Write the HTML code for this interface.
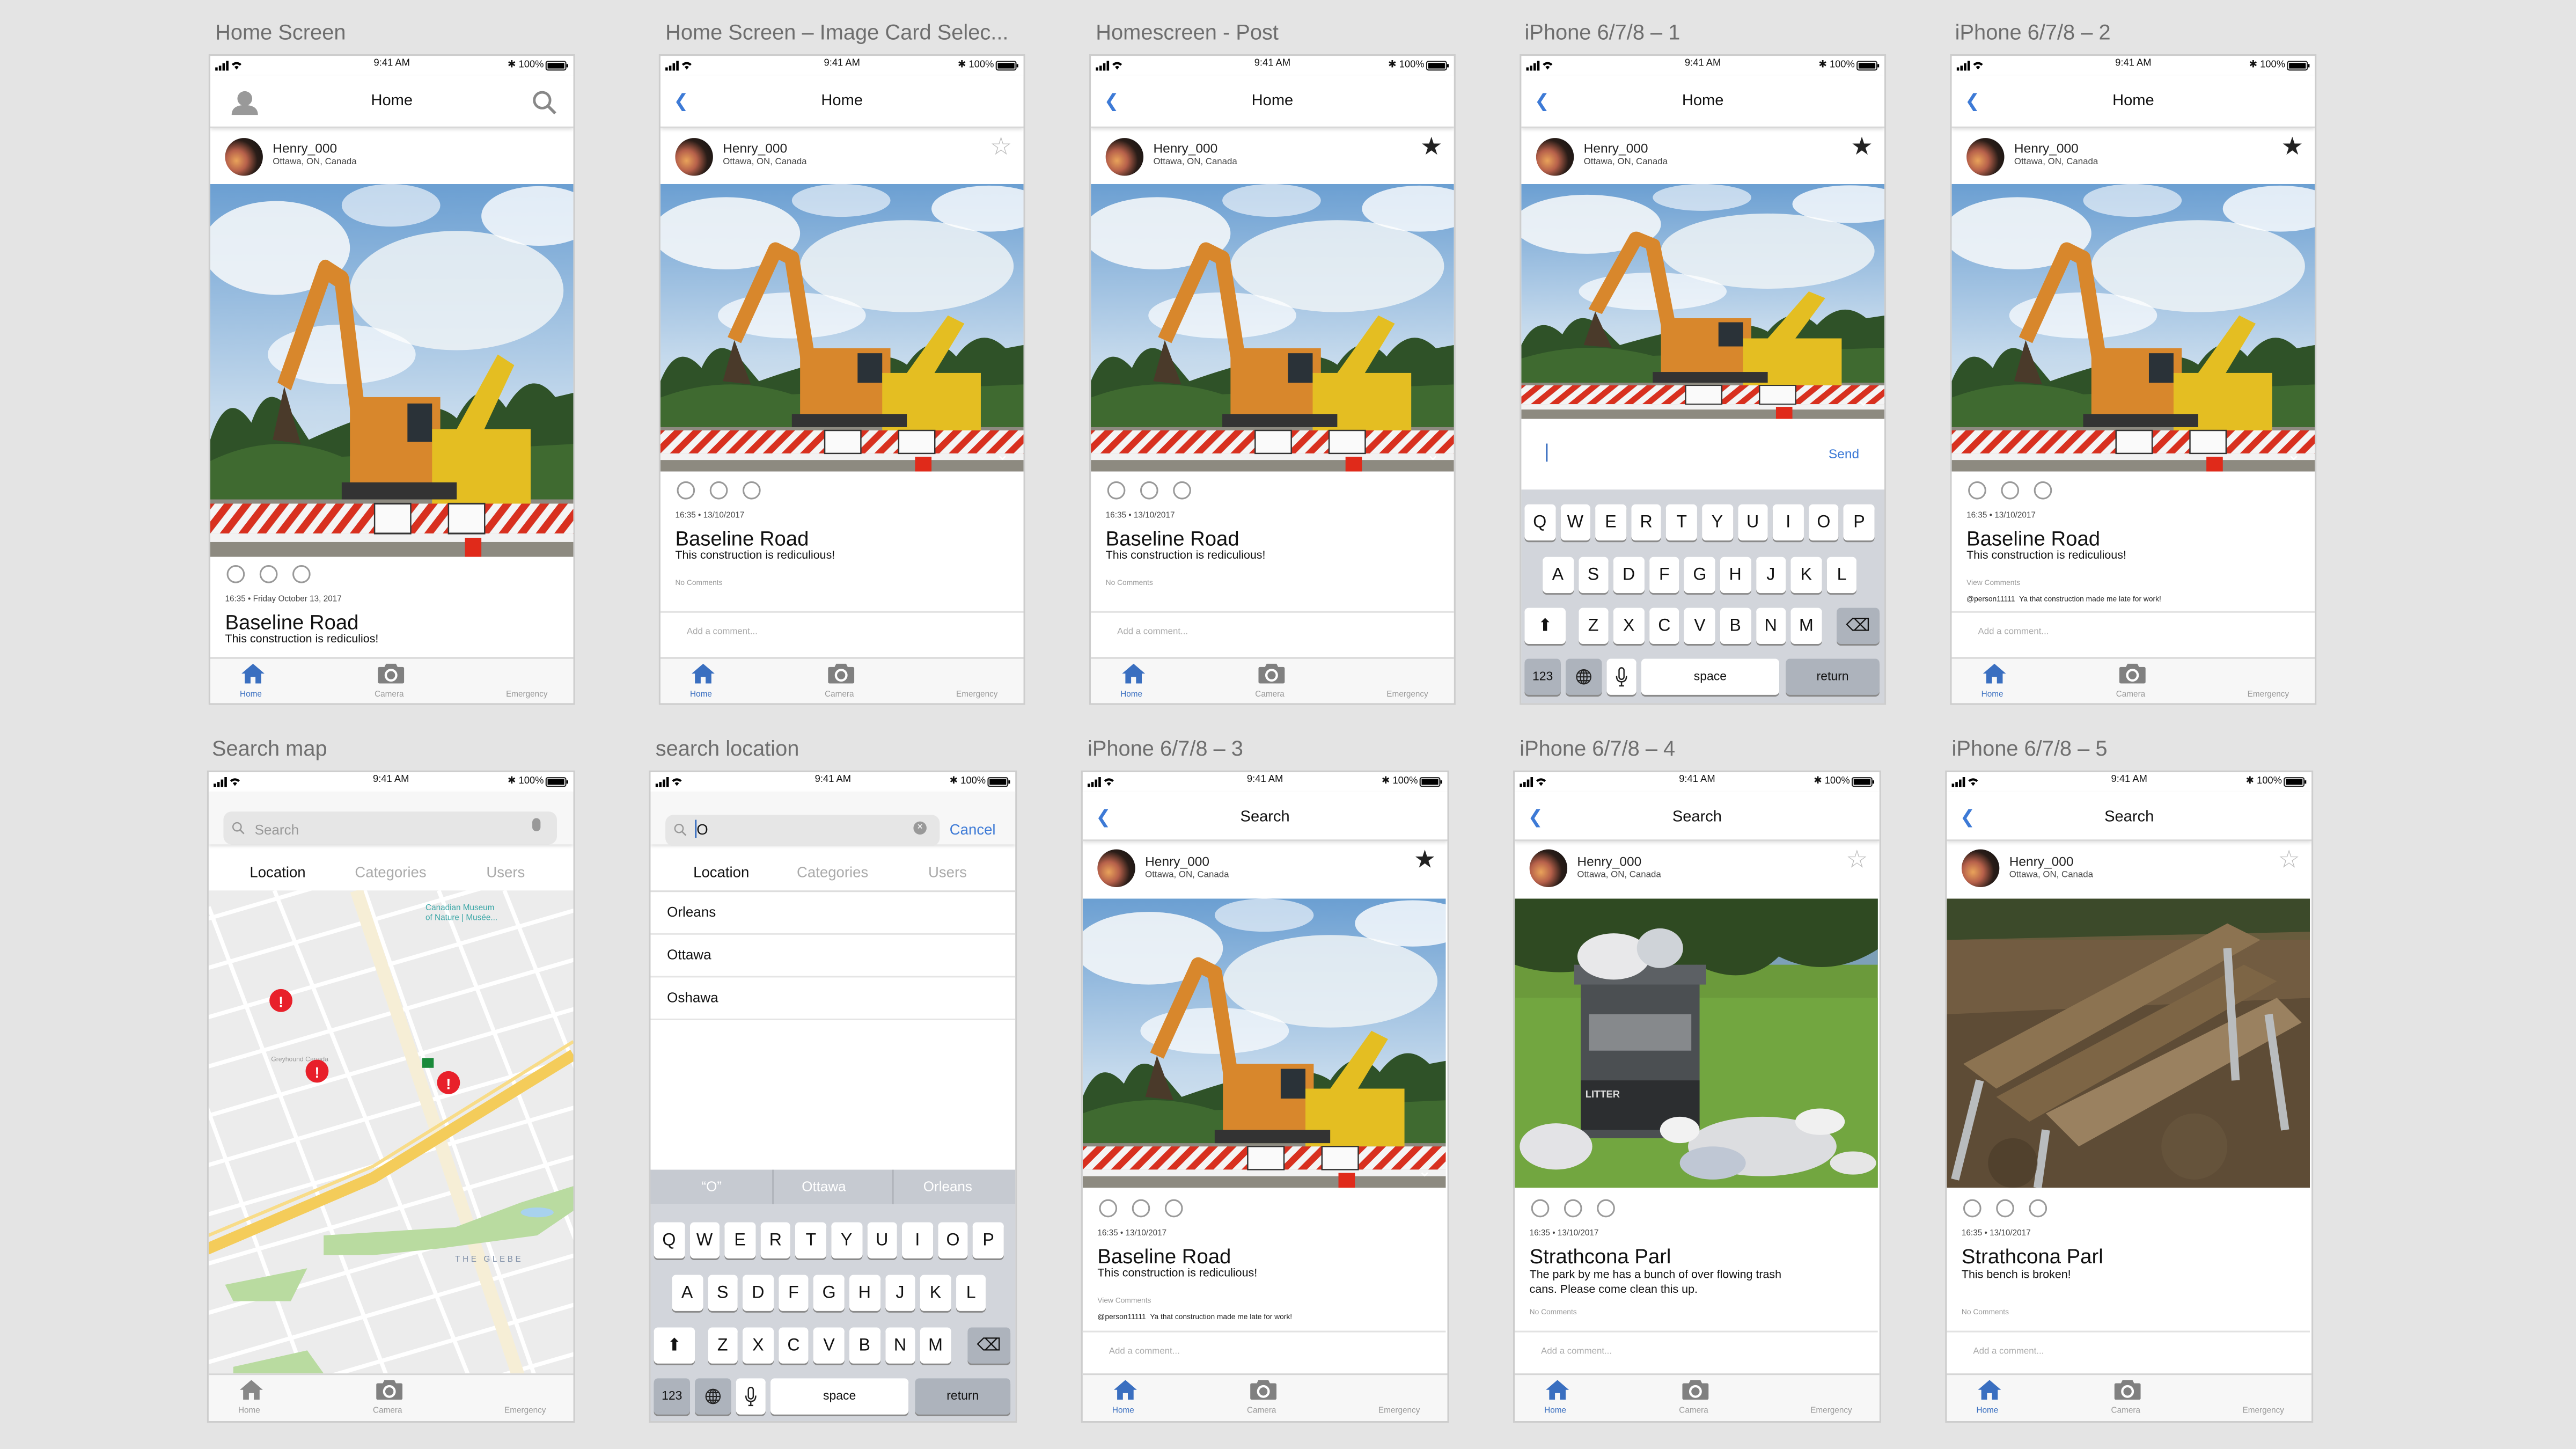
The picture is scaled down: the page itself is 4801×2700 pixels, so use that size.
<!DOCTYPE html>
<html><head><meta charset="utf-8">
<style>
html,body{margin:0;padding:0;background:#e4e4e4;overflow:hidden}
#w{position:absolute;left:0;top:0;width:1568px;height:882px;transform:scale(3.0619,3.0612);transform-origin:0 0;font-family:"Liberation Sans",sans-serif;background:#e4e4e4}
.ttl{position:absolute;font-size:13px;color:#6e6e6e;white-space:nowrap}
.ph{position:absolute;width:221px;height:394px;background:#fff;outline:1px solid #cdcdcd;overflow:hidden}
.ph *{position:absolute;margin:0;white-space:nowrap}
.sbt{top:2px;left:0;width:100%;text-align:center;font-size:6px;color:#111}
.sbr{top:2px;right:18px;font-size:6px;color:#111}
.nav{top:12px;left:0;width:100%;height:31px;border-bottom:1px solid #d8d8d8;box-shadow:0 1px 2px rgba(0,0,0,.12);background:#fff}
.nt{top:10px;left:0;width:100%;text-align:center;font-size:9.5px;color:#111}
.back{top:9px;left:8px;font-size:11px;color:#3d7ad6}
.av{left:9px;top:50px;width:23px;height:23px;border-radius:50%;background:radial-gradient(circle at 30% 60%,#e9a35a 0,#b6604a 30%,#2a1d18 60%,#111 100%)}
.nm{left:38px;top:52px;font-size:8px;color:#222}
.loc{left:38px;top:62px;font-size:5.5px;color:#444}
.star{right:7px;top:46px;font-size:15px;color:#222}
.star.o{color:#bbb}
.img{left:0;top:78px;width:221px}
.cir{width:9px;height:9px;border:1px solid #999;border-radius:50%}
.tm{left:9px;font-size:5px;color:#444}
.h{left:9px;font-size:12.5px;color:#111}
.d{left:9px;font-size:7px;color:#111}
.s{left:9px;font-size:4.5px;color:#999}
.ac{left:0;width:221px;height:26px;border-top:1px solid #e2e2e2;background:#fff}
.ac span{left:16px;top:9px;font-size:5.5px;color:#aaa}
.tb{left:0;top:366px;width:100%;height:28px;border-top:1px solid #d6d6d6;background:#f7f7f7}
.tb .l{top:19px;font-size:5px;color:#999}
.chev{font-size:10px;color:#fff;left:204px}
.kb{left:0;width:100%;background:#d2d5db}
.k{width:18.5px;height:22px;background:#fff;border-radius:2.5px;box-shadow:0 1px 0 #8a8a8a;font-size:10.5px;line-height:22px;text-align:center;color:#111}
.k.g{background:#adb3bc}
.k.f{font-size:7.5px}
.k svg{left:50%;top:50%;transform:translate(-50%,-50%)}
</style></head><body>
<svg width="0" height="0" style="position:absolute">
<defs>
<linearGradient id="sky" x1="0" y1="0" x2="0" y2="1"><stop offset="0" stop-color="#6b9fd2"/><stop offset=".6" stop-color="#c4d9ec"/><stop offset="1" stop-color="#e3ebf1"/></linearGradient>
<pattern id="str" width="8" height="8" patternUnits="userSpaceOnUse" patternTransform="rotate(45)"><rect width="4" height="8" fill="#d8301f"/><rect x="4" width="4" height="8" fill="#f4f4f4"/></pattern>
<symbol id="cons" viewBox="0 0 221 175" preserveAspectRatio="none">
<rect width="221" height="175" fill="url(#sky)"/>
<ellipse cx="40" cy="30" rx="45" ry="22" fill="#f3f6f8" opacity=".9"/>
<ellipse cx="150" cy="50" rx="65" ry="28" fill="#eef3f6" opacity=".85"/>
<ellipse cx="200" cy="15" rx="35" ry="14" fill="#fff" opacity=".8"/>
<ellipse cx="80" cy="80" rx="45" ry="14" fill="#fff" opacity=".7"/>
<ellipse cx="110" cy="10" rx="30" ry="10" fill="#fff" opacity=".6"/>
<path d="M0 120 Q10 95 25 112 Q35 90 50 108 L60 120 Q130 95 150 110 Q165 88 180 105 Q195 85 210 100 L221 98 L221 150 L0 150Z" fill="#2f5228"/>
<path d="M0 130 Q40 115 80 128 L221 122 L221 150 L0 150Z" fill="#3f6a30"/>
<rect y="148" width="221" height="27" fill="#8d8a80"/>
<path d="M95 140 L80 45 L70 40 L45 95" fill="none" stroke="#d8872c" stroke-width="9" stroke-linejoin="round"/>
<path d="M45 95 L38 120 L55 122Z" fill="#4a3a2a"/>
<rect x="85" y="100" width="55" height="42" fill="#d8872c"/>
<rect x="120" y="103" width="15" height="18" fill="#2a3238"/>
<rect x="135" y="115" width="60" height="35" fill="#e4be22"/>
<path d="M150 115 L175 80 L185 85 L165 118Z" fill="#e4be22"/>
<rect x="80" y="140" width="70" height="8" fill="#333"/>
<rect x="0" y="150" width="221" height="14" fill="url(#str)"/>
<rect x="0" y="164" width="221" height="4" fill="#f2f2f2"/>
<rect x="100" y="150" width="22" height="14" fill="#fafafa" stroke="#333" stroke-width=".8"/>
<rect x="145" y="150" width="22" height="14" fill="#fafafa" stroke="#333" stroke-width=".8"/>
<rect x="155" y="166" width="10" height="9" fill="#e02a1a"/>
</symbol>
<symbol id="trash" viewBox="0 0 221 175" preserveAspectRatio="none">
<rect width="221" height="175" fill="#6b9a3b"/>
<rect width="221" height="40" fill="#7da0b8"/>
<path d="M0 0 L221 0 L221 30 Q190 50 160 35 Q140 55 110 40 Q80 55 60 38 Q30 50 0 40Z" fill="#2f4a22"/>
<rect y="60" width="221" height="115" fill="#72a640"/>
<rect x="40" y="45" width="72" height="100" fill="#4b4f52"/>
<rect x="36" y="40" width="80" height="12" fill="#5c6064"/>
<rect x="45" y="70" width="62" height="22" fill="#86898c"/>
<rect x="40" y="110" width="72" height="30" fill="#2c2e30"/>
<ellipse cx="60" cy="35" rx="22" ry="14" fill="#e8e8ea"/>
<ellipse cx="88" cy="30" rx="14" ry="12" fill="#cfd3d8"/>
<ellipse cx="150" cy="150" rx="45" ry="18" fill="#dcdde0"/>
<ellipse cx="25" cy="150" rx="22" ry="14" fill="#e3e3e6"/>
<ellipse cx="120" cy="160" rx="20" ry="10" fill="#bfc7d4"/>
<ellipse cx="185" cy="135" rx="15" ry="8" fill="#f0f0f0"/>
<ellipse cx="100" cy="140" rx="12" ry="8" fill="#f2f2f2"/>
<ellipse cx="205" cy="160" rx="14" ry="7" fill="#e6e6e6"/>
</symbol>
<symbol id="bench" viewBox="0 0 221 175" preserveAspectRatio="none">
<rect width="221" height="175" fill="#5e4c36"/>
<rect width="221" height="25" fill="#3c4a2a"/>
<path d="M0 25 L221 20 L221 60 L0 70Z" fill="#7a6446" opacity=".7"/>
<path d="M10 100 L170 15 L190 25 L30 115Z" fill="#8c7351"/>
<path d="M30 120 L180 40 L200 50 L50 135Z" fill="#7d6545"/>
<path d="M60 130 L200 60 L215 75 L80 150Z" fill="#9a8160"/>
<path d="M20 110 L5 170 M60 140 L55 175 M170 30 L175 110 M195 70 L205 140" stroke="#b9bcbe" stroke-width="5" fill="none"/>
<circle cx="40" cy="160" r="15" fill="#4a3a28" opacity=".6"/>
<circle cx="150" cy="150" r="20" fill="#6b5840" opacity=".6"/>
</symbol>
<symbol id="home" viewBox="0 0 14 12"><path d="M7 0 L14 6 L12 6 L12 12 L8.5 12 L8.5 8 L5.5 8 L5.5 12 L2 12 L2 6 L0 6Z"/></symbol>
<symbol id="cam" viewBox="0 0 16 12"><path d="M0 3 Q0 2 1 2 L4 2 L5 0 L11 0 L12 2 L15 2 Q16 2 16 3 L16 11 Q16 12 15 12 L1 12 Q0 12 0 11Z" fill="#808080"/><circle cx="8" cy="7" r="3.2" fill="none" stroke="#fff" stroke-width="1.4"/></symbol>
<symbol id="sig" viewBox="0 0 20 6"><rect x="0" y="4" width="1.5" height="2"/><rect x="2.2" y="3" width="1.5" height="3"/><rect x="4.4" y="1.5" width="1.5" height="4.5"/><rect x="6.6" y="0" width="1.5" height="6"/><path d="M10 2 Q13 -0.5 16 2 L15 3 Q13 1.3 11 3Z M11.7 3.7 Q13 2.6 14.3 3.7 L13 5.4Z"/></symbol>
<symbol id="bat" viewBox="0 0 14 6"><rect x=".4" y=".4" width="12" height="5.2" rx="1" fill="none" stroke="#222" stroke-width=".7"/><rect x="1.3" y="1.3" width="10.2" height="3.4"/><rect x="12.8" y="2" width="1" height="2"/></symbol>
<symbol id="globe" viewBox="0 0 10 10"><g fill="none" stroke="#222" stroke-width=".7"><circle cx="5" cy="5" r="4.3"/><ellipse cx="5" cy="5" rx="2" ry="4.3"/><path d="M.7 5H9.3M1.5 2.7H8.5M1.5 7.3H8.5M5 .7V9.3"/></g></symbol>
<symbol id="mic" viewBox="0 0 8 12"><g fill="none" stroke="#222" stroke-width=".8"><rect x="2.5" y=".5" width="3" height="7" rx="1.5"/><path d="M1 5.5 Q1 9 4 9 Q7 9 7 5.5M4 9V11.5M2.5 11.5H5.5"/></g></symbol>
</defs></svg>

<div id="w">
<div class="ttl" style="left:131px;top:12px">Home Screen</div>
<div class="ttl" style="left:405px;top:12px">Home Screen – Image Card Selec...</div>
<div class="ttl" style="left:667px;top:12px">Homescreen - Post</div>
<div class="ttl" style="left:928px;top:12px">iPhone 6/7/8 – 1</div>
<div class="ttl" style="left:1190px;top:12px">iPhone 6/7/8 – 2</div>
<div class="ttl" style="left:129px;top:448px">Search map</div>
<div class="ttl" style="left:399px;top:448px">search location</div>
<div class="ttl" style="left:662px;top:448px">iPhone 6/7/8 – 3</div>
<div class="ttl" style="left:925px;top:448px">iPhone 6/7/8 – 4</div>
<div class="ttl" style="left:1188px;top:448px">iPhone 6/7/8 – 5</div>

<!-- R1 P1 -->
<div class="ph" style="left:128px;top:34px">
<svg style="left:3px;top:3px" width="20" height="6"><use href="#sig"/></svg><div class="sbt">9:41 AM</div><div class="sbr">✱ 100%</div><svg style="right:3px;top:3px" width="14" height="6"><use href="#bat"/></svg>
<div class="nav"><svg style="left:12px;top:9px" width="18" height="15" viewBox="0 0 18 15"><circle cx="9" cy="5" r="4.5" fill="#999"/><path d="M1 15 Q1 9 9 9 Q17 9 17 15Z" fill="#999"/></svg><div class="nt">Home</div><svg style="right:10px;top:9px" width="15" height="15" viewBox="0 0 15 15"><circle cx="6" cy="6" r="4.8" fill="none" stroke="#888" stroke-width="1.6"/><path d="M9.5 9.5 L14 14" stroke="#888" stroke-width="1.8"/></svg></div>
<div class="av"></div><div class="nm">Henry_000</div><div class="loc">Ottawa, ON, Canada</div>
<svg class="img" height="227"><use href="#cons" width="221" height="227"/></svg>
<div class="cir" style="left:10px;top:310px"></div><div class="cir" style="left:30px;top:310px"></div><div class="cir" style="left:50px;top:310px"></div>
<div class="tm" style="top:328px">16:35 • Friday October 13, 2017</div>
<div class="h" style="top:338px">Baseline Road</div>
<div class="d" style="top:352px">This construction is rediculios!</div>
<div class="tb"><svg style="left:19px;top:3px" width="14" height="12" fill="#3a6fc0"><use href="#home"/></svg><div class="l" style="left:18px;color:#3a6fc0">Home</div><svg style="left:102px;top:3px" width="16" height="12"><use href="#cam"/></svg><div class="l" style="left:100px">Camera</div><div class="l" style="left:180px">Emergency</div></div>
</div>

<!-- R1 P2..P5 -->
<div class="ph" style="left:402px;top:34px">
<svg style="left:3px;top:3px" width="20" height="6"><use href="#sig"/></svg><div class="sbt">9:41 AM</div><div class="sbr">✱ 100%</div><svg style="right:3px;top:3px" width="14" height="6"><use href="#bat"/></svg>
<div class="nav"><div class="back">❮</div><div class="nt">Home</div></div>
<div class="av"></div><div class="nm">Henry_000</div><div class="loc">Ottawa, ON, Canada</div><div class="star o">☆</div>
<svg class="img" height="175"><use href="#cons" width="221" height="175"/></svg><div class="chev" style="top:238px">⌄</div>
<div class="cir" style="left:10px;top:259px"></div><div class="cir" style="left:30px;top:259px"></div><div class="cir" style="left:50px;top:259px"></div>
<div class="tm" style="top:277px">16:35 • 13/10/2017</div>
<div class="h" style="top:287px">Baseline Road</div>
<div class="d" style="top:301px">This construction is rediculious!</div>
<div class="s" style="top:318px">No Comments</div>
<div class="ac" style="top:338px"><span>Add a comment...</span></div>
<div class="tb"><svg style="left:19px;top:3px" width="14" height="12" fill="#3a6fc0"><use href="#home"/></svg><div class="l" style="left:18px;color:#3a6fc0">Home</div><svg style="left:102px;top:3px" width="16" height="12"><use href="#cam"/></svg><div class="l" style="left:100px">Camera</div><div class="l" style="left:180px">Emergency</div></div>
</div>

<div class="ph" style="left:664px;top:34px">
<svg style="left:3px;top:3px" width="20" height="6"><use href="#sig"/></svg><div class="sbt">9:41 AM</div><div class="sbr">✱ 100%</div><svg style="right:3px;top:3px" width="14" height="6"><use href="#bat"/></svg>
<div class="nav"><div class="back">❮</div><div class="nt">Home</div></div>
<div class="av"></div><div class="nm">Henry_000</div><div class="loc">Ottawa, ON, Canada</div><div class="star">★</div>
<svg class="img" height="175"><use href="#cons" width="221" height="175"/></svg><div class="chev" style="top:238px">⌄</div>
<div class="cir" style="left:10px;top:259px"></div><div class="cir" style="left:30px;top:259px"></div><div class="cir" style="left:50px;top:259px"></div>
<div class="tm" style="top:277px">16:35 • 13/10/2017</div>
<div class="h" style="top:287px">Baseline Road</div>
<div class="d" style="top:301px">This construction is rediculious!</div>
<div class="s" style="top:318px">No Comments</div>
<div class="ac" style="top:338px"><span>Add a comment...</span></div>
<div class="tb"><svg style="left:19px;top:3px" width="14" height="12" fill="#3a6fc0"><use href="#home"/></svg><div class="l" style="left:18px;color:#3a6fc0">Home</div><svg style="left:102px;top:3px" width="16" height="12"><use href="#cam"/></svg><div class="l" style="left:100px">Camera</div><div class="l" style="left:180px">Emergency</div></div>
</div>

<div class="ph" style="left:926px;top:34px">
<svg style="left:3px;top:3px" width="20" height="6"><use href="#sig"/></svg><div class="sbt">9:41 AM</div><div class="sbr">✱ 100%</div><svg style="right:3px;top:3px" width="14" height="6"><use href="#bat"/></svg>
<div class="nav"><div class="back">❮</div><div class="nt">Home</div></div>
<div class="av"></div><div class="nm">Henry_000</div><div class="loc">Ottawa, ON, Canada</div><div class="star">★</div>
<svg class="img" height="143"><use href="#cons" width="221" height="143"/></svg><div class="chev" style="top:205px">⌄</div>
<div style="left:15px;top:236px;width:1px;height:11px;background:#3a6fc0"></div>
<div style="left:187px;top:238px;font-size:8px;color:#3d7ad6">Send</div>
<div class="kb" style="top:264px;height:130px">
<div class="k" style="left:2px;top:9px">Q</div><div class="k" style="left:23.6px;top:9px">W</div><div class="k" style="left:45.2px;top:9px">E</div><div class="k" style="left:66.8px;top:9px">R</div><div class="k" style="left:88.4px;top:9px">T</div><div class="k" style="left:110px;top:9px">Y</div><div class="k" style="left:131.6px;top:9px">U</div><div class="k" style="left:153.2px;top:9px">I</div><div class="k" style="left:174.8px;top:9px">O</div><div class="k" style="left:196.4px;top:9px">P</div>
<div class="k" style="left:13px;top:41px">A</div><div class="k" style="left:34.6px;top:41px">S</div><div class="k" style="left:56.2px;top:41px">D</div><div class="k" style="left:77.8px;top:41px">F</div><div class="k" style="left:99.4px;top:41px">G</div><div class="k" style="left:121px;top:41px">H</div><div class="k" style="left:142.6px;top:41px">J</div><div class="k" style="left:164.2px;top:41px">K</div><div class="k" style="left:185.8px;top:41px">L</div>
<div class="k" style="left:2px;top:72px;width:25px">⬆</div><div class="k" style="left:34.6px;top:72px">Z</div><div class="k" style="left:56.2px;top:72px">X</div><div class="k" style="left:77.8px;top:72px">C</div><div class="k" style="left:99.4px;top:72px">V</div><div class="k" style="left:121px;top:72px">B</div><div class="k" style="left:142.6px;top:72px">N</div><div class="k" style="left:164.2px;top:72px">M</div><div class="k g" style="left:192px;top:72px;width:26px">⌫</div>
<div class="k g f" style="left:2px;top:103px;width:22px">123</div><div class="k g" style="left:27px;top:103px;width:22px"><svg width="10" height="10"><use href="#globe"/></svg></div><div class="k" style="left:52px;top:103px;width:18px"><svg width="8" height="12"><use href="#mic"/></svg></div><div class="k f" style="left:73px;top:103px;width:84px">space</div><div class="k g f" style="left:161px;top:103px;width:57px">return</div>
</div>
</div>

<div class="ph" style="left:1188px;top:34px">
<svg style="left:3px;top:3px" width="20" height="6"><use href="#sig"/></svg><div class="sbt">9:41 AM</div><div class="sbr">✱ 100%</div><svg style="right:3px;top:3px" width="14" height="6"><use href="#bat"/></svg>
<div class="nav"><div class="back">❮</div><div class="nt">Home</div></div>
<div class="av"></div><div class="nm">Henry_000</div><div class="loc">Ottawa, ON, Canada</div><div class="star">★</div>
<svg class="img" height="175"><use href="#cons" width="221" height="175"/></svg><div class="chev" style="top:238px">⌄</div>
<div class="cir" style="left:10px;top:259px"></div><div class="cir" style="left:30px;top:259px"></div><div class="cir" style="left:50px;top:259px"></div>
<div class="tm" style="top:277px">16:35 • 13/10/2017</div>
<div class="h" style="top:287px">Baseline Road</div>
<div class="d" style="top:301px">This construction is rediculious!</div>
<div class="s" style="top:318px">View Comments</div>
<div class="s" style="top:328px;color:#222">@person11111 &nbsp;Ya that construction made me late for work!</div>
<div class="ac" style="top:338px"><span>Add a comment...</span></div>
<div class="tb"><svg style="left:19px;top:3px" width="14" height="12" fill="#3a6fc0"><use href="#home"/></svg><div class="l" style="left:18px;color:#3a6fc0">Home</div><svg style="left:102px;top:3px" width="16" height="12"><use href="#cam"/></svg><div class="l" style="left:100px">Camera</div><div class="l" style="left:180px">Emergency</div></div>
</div>

<!-- R2 P1 map -->
<div class="ph" style="left:127px;top:470px;width:222px;height:395px">
<svg style="left:3px;top:3px" width="20" height="6"><use href="#sig"/></svg><div class="sbt">9:41 AM</div><div class="sbr">✱ 100%</div><svg style="right:3px;top:3px" width="14" height="6"><use href="#bat"/></svg>
<div style="left:0;top:12px;width:222px;height:32px;background:#f7f7f7;box-shadow:0 1px 2px rgba(0,0,0,.15)"></div>
<div style="left:9px;top:24px;width:203px;height:20px;border-radius:5px;background:#e6e6e6"></div>
<svg style="left:14px;top:30px" width="8" height="8" viewBox="0 0 8 8"><circle cx="3.3" cy="3.3" r="2.5" fill="none" stroke="#999" stroke-width=".8"/><path d="M5 5L7.5 7.5" stroke="#999" stroke-width=".9"/></svg>
<div style="left:28px;top:30px;font-size:8.5px;color:#999">Search</div>
<div style="left:197px;top:28px;width:5px;height:8px;border-radius:3px;background:#999"></div>
<div style="left:25px;top:56px;font-size:9px;color:#111">Location</div>
<div style="left:89px;top:56px;font-size:9px;color:#aaa">Categories</div>
<div style="left:169px;top:56px;font-size:9px;color:#aaa">Users</div>
<svg style="left:0;top:72px" width="222" height="294" viewBox="0 0 222 294">
<rect width="222" height="294" fill="#ececec"/>
<g stroke="#fff" stroke-width="2.5" fill="none">
<path d="M-10 20 L230 -50 M-10 50 L230 -20 M-10 80 L230 10 M-10 110 L230 40 M-10 140 L230 70 M-10 170 L230 100 M-10 200 L230 130 M-10 230 L230 160 M-10 260 L230 190 M-10 290 L230 220 M-10 320 L230 250 M-10 350 L230 280 M-10 380 L230 310"/>
<path d="M0 10 L110 300 M40 0 L160 300 M95 0 L200 300 M140 0 L230 230 M180 0 L240 150 M-20 80 L60 300"/>
</g>
<path d="M90 0 L190 300" stroke="#f6eed6" stroke-width="8"/>
<path d="M-5 220 L100 175 L222 100" stroke="#f4cc5a" stroke-width="7" fill="none"/>
<path d="M-5 212 L100 168 L222 92" stroke="#f8dc88" stroke-width="2" fill="none"/>
<path d="M70 210 L150 205 L190 190 L222 180 L222 195 L200 210 L140 218 L100 222 L70 222Z" fill="#b9dba0"/>
<path d="M10 240 L60 230 L50 250 L15 250Z" fill="#b9dba0"/>
<path d="M15 290 L60 280 L70 294 L15 294Z" fill="#b9dba0"/>
<ellipse cx="200" cy="196" rx="10" ry="3" fill="#a8d2ee"/>
<text x="132" y="12" font-size="5" fill="#3aa6a6" font-family="Liberation Sans">Canadian Museum</text>
<text x="132" y="18" font-size="5" fill="#3aa6a6" font-family="Liberation Sans">of Nature | Musée...</text>
<text x="38" y="104" font-size="4" fill="#999" font-family="Liberation Sans">Greyhound Canada</text>
<text x="150" y="226" font-size="5" fill="#8090a8" letter-spacing="1.5" font-family="Liberation Sans">THE GLEBE</text>
<rect x="130" y="102" width="7" height="6" fill="#1a8a3a"/>
<g fill="#e8202a"><circle cx="44" cy="67" r="7"/><circle cx="66" cy="110" r="7"/><circle cx="146" cy="117" r="7"/></g>
<g fill="#fff" font-size="9" font-weight="bold" font-family="Liberation Sans" text-anchor="middle"><text x="44" y="71">!</text><text x="66" y="114">!</text><text x="146" y="121">!</text></g>
</svg>
<div class="tb"><svg style="left:19px;top:3px" width="14" height="12" fill="#888"><use href="#home"/></svg><div class="l" style="left:18px">Home</div><svg style="left:102px;top:3px" width="16" height="12"><use href="#cam"/></svg><div class="l" style="left:100px">Camera</div><div class="l" style="left:180px">Emergency</div></div>
</div>

<!-- R2 P2 search location -->
<div class="ph" style="left:396px;top:470px;width:222px;height:395px">
<svg style="left:3px;top:3px" width="20" height="6"><use href="#sig"/></svg><div class="sbt">9:41 AM</div><div class="sbr">✱ 100%</div><svg style="right:3px;top:3px" width="14" height="6"><use href="#bat"/></svg>
<div style="left:0;top:12px;width:222px;height:32px;background:#f7f7f7;box-shadow:0 1px 2px rgba(0,0,0,.15)"></div>
<div style="left:9px;top:26px;width:167px;height:19px;border-radius:5px;background:#e6e6e6"></div>
<svg style="left:14px;top:31px" width="8" height="8" viewBox="0 0 8 8"><circle cx="3.3" cy="3.3" r="2.5" fill="none" stroke="#999" stroke-width=".8"/><path d="M5 5L7.5 7.5" stroke="#999" stroke-width=".9"/></svg>
<div style="left:28px;top:30px;font-size:9px;color:#111">O</div>
<div style="left:27px;top:29px;width:1px;height:11px;background:#3a6fc0"></div>
<div style="left:160px;top:30px;width:8px;height:8px;border-radius:50%;background:#999;color:#fff;font-size:6px;line-height:8px;text-align:center">×</div>
<div style="left:182px;top:30px;font-size:9px;color:#3d7ad6">Cancel</div>
<div style="left:26px;top:56px;font-size:9px;color:#111">Location</div>
<div style="left:89px;top:56px;font-size:9px;color:#aaa">Categories</div>
<div style="left:169px;top:56px;font-size:9px;color:#aaa">Users</div>
<div style="left:0;top:72px;width:222px;height:1px;background:#ddd"></div>
<div style="left:10px;top:80px;font-size:8.5px;color:#111">Orleans</div>
<div style="left:0;top:98px;width:222px;height:1px;background:#e5e5e5"></div>
<div style="left:10px;top:106px;font-size:8.5px;color:#111">Ottawa</div>
<div style="left:0;top:124px;width:222px;height:1px;background:#e5e5e5"></div>
<div style="left:10px;top:132px;font-size:8.5px;color:#111">Oshawa</div>
<div style="left:0;top:150px;width:222px;height:1px;background:#e5e5e5"></div>
<div style="left:0;top:242px;width:222px;height:21px;background:#c6cad1"></div>
<div style="left:31px;top:247px;font-size:8.5px;color:#fff">“O”</div>
<div style="left:74px;top:242px;width:1px;height:21px;background:#b0b4bb"></div>
<div style="left:92px;top:247px;font-size:8.5px;color:#fff">Ottawa</div>
<div style="left:147px;top:242px;width:1px;height:21px;background:#b0b4bb"></div>
<div style="left:166px;top:247px;font-size:8.5px;color:#fff">Orleans</div>
<div class="kb" style="top:263px;height:132px">
<div class="k" style="left:2px;top:11px">Q</div><div class="k" style="left:23.6px;top:11px">W</div><div class="k" style="left:45.2px;top:11px">E</div><div class="k" style="left:66.8px;top:11px">R</div><div class="k" style="left:88.4px;top:11px">T</div><div class="k" style="left:110px;top:11px">Y</div><div class="k" style="left:131.6px;top:11px">U</div><div class="k" style="left:153.2px;top:11px">I</div><div class="k" style="left:174.8px;top:11px">O</div><div class="k" style="left:196.4px;top:11px">P</div>
<div class="k" style="left:13px;top:43px">A</div><div class="k" style="left:34.6px;top:43px">S</div><div class="k" style="left:56.2px;top:43px">D</div><div class="k" style="left:77.8px;top:43px">F</div><div class="k" style="left:99.4px;top:43px">G</div><div class="k" style="left:121px;top:43px">H</div><div class="k" style="left:142.6px;top:43px">J</div><div class="k" style="left:164.2px;top:43px">K</div><div class="k" style="left:185.8px;top:43px">L</div>
<div class="k" style="left:2px;top:75px;width:25px">⬆</div><div class="k" style="left:34.6px;top:75px">Z</div><div class="k" style="left:56.2px;top:75px">X</div><div class="k" style="left:77.8px;top:75px">C</div><div class="k" style="left:99.4px;top:75px">V</div><div class="k" style="left:121px;top:75px">B</div><div class="k" style="left:142.6px;top:75px">N</div><div class="k" style="left:164.2px;top:75px">M</div><div class="k g" style="left:193px;top:75px;width:26px">⌫</div>
<div class="k g f" style="left:2px;top:106px;width:22px">123</div><div class="k g" style="left:27px;top:106px;width:22px"><svg width="10" height="10"><use href="#globe"/></svg></div><div class="k" style="left:52px;top:106px;width:18px"><svg width="8" height="12"><use href="#mic"/></svg></div><div class="k f" style="left:73px;top:106px;width:84px">space</div><div class="k g f" style="left:161px;top:106px;width:58px">return</div>
</div>
</div>

<!-- R2 P3 -->
<div class="ph" style="left:659px;top:470px;width:222px;height:395px">
<svg style="left:3px;top:3px" width="20" height="6"><use href="#sig"/></svg><div class="sbt">9:41 AM</div><div class="sbr">✱ 100%</div><svg style="right:3px;top:3px" width="14" height="6"><use href="#bat"/></svg>
<div class="nav" style="height:29px"><div class="back">❮</div><div class="nt">Search</div></div>
<div class="av" style="top:47px"></div><div class="nm" style="top:50px">Henry_000</div><div class="loc" style="top:60px">Ottawa, ON, Canada</div><div class="star" style="top:44px">★</div>
<svg class="img" style="top:77px" height="176"><use href="#cons" width="222" height="176"/></svg><div class="chev" style="top:238px">⌄</div>
<div class="cir" style="left:10px;top:260px"></div><div class="cir" style="left:30px;top:260px"></div><div class="cir" style="left:50px;top:260px"></div>
<div class="tm" style="top:278px">16:35 • 13/10/2017</div>
<div class="h" style="top:288px">Baseline Road</div>
<div class="d" style="top:302px">This construction is rediculious!</div>
<div class="s" style="top:319px">View Comments</div>
<div class="s" style="top:329px;color:#222">@person11111 &nbsp;Ya that construction made me late for work!</div>
<div class="ac" style="top:340px"><span>Add a comment...</span></div>
<div class="tb"><svg style="left:19px;top:3px" width="14" height="12" fill="#3a6fc0"><use href="#home"/></svg><div class="l" style="left:18px;color:#3a6fc0">Home</div><svg style="left:102px;top:3px" width="16" height="12"><use href="#cam"/></svg><div class="l" style="left:100px">Camera</div><div class="l" style="left:180px">Emergency</div></div>
</div>

<!-- R2 P4 -->
<div class="ph" style="left:922px;top:470px;width:222px;height:395px">
<svg style="left:3px;top:3px" width="20" height="6"><use href="#sig"/></svg><div class="sbt">9:41 AM</div><div class="sbr">✱ 100%</div><svg style="right:3px;top:3px" width="14" height="6"><use href="#bat"/></svg>
<div class="nav" style="height:29px"><div class="back">❮</div><div class="nt">Search</div></div>
<div class="av" style="top:47px"></div><div class="nm" style="top:50px">Henry_000</div><div class="loc" style="top:60px">Ottawa, ON, Canada</div><div class="star o" style="top:44px">☆</div>
<svg class="img" style="top:77px" height="176"><use href="#trash" width="222" height="176"/></svg>
<div style="left:43px;top:194px;font-size:6px;color:#ddd;font-weight:bold">LITTER</div>
<div class="cir" style="left:10px;top:260px"></div><div class="cir" style="left:30px;top:260px"></div><div class="cir" style="left:50px;top:260px"></div>
<div class="tm" style="top:278px">16:35 • 13/10/2017</div>
<div class="h" style="top:288px">Strathcona Parl</div>
<div class="d" style="top:303px">The park by me has a bunch of over flowing trash</div>
<div class="d" style="top:312px">cans. Please come clean this up.</div>
<div class="s" style="top:326px">No Comments</div>
<div class="ac" style="top:340px"><span>Add a comment...</span></div>
<div class="tb"><svg style="left:19px;top:3px" width="14" height="12" fill="#3a6fc0"><use href="#home"/></svg><div class="l" style="left:18px;color:#3a6fc0">Home</div><svg style="left:102px;top:3px" width="16" height="12"><use href="#cam"/></svg><div class="l" style="left:100px">Camera</div><div class="l" style="left:180px">Emergency</div></div>
</div>

<!-- R2 P5 -->
<div class="ph" style="left:1185px;top:470px;width:222px;height:395px">
<svg style="left:3px;top:3px" width="20" height="6"><use href="#sig"/></svg><div class="sbt">9:41 AM</div><div class="sbr">✱ 100%</div><svg style="right:3px;top:3px" width="14" height="6"><use href="#bat"/></svg>
<div class="nav" style="height:29px"><div class="back">❮</div><div class="nt">Search</div></div>
<div class="av" style="top:47px"></div><div class="nm" style="top:50px">Henry_000</div><div class="loc" style="top:60px">Ottawa, ON, Canada</div><div class="star o" style="top:44px">☆</div>
<svg class="img" style="top:77px" height="176"><use href="#bench" width="222" height="176"/></svg>
<div class="cir" style="left:10px;top:260px"></div><div class="cir" style="left:30px;top:260px"></div><div class="cir" style="left:50px;top:260px"></div>
<div class="tm" style="top:278px">16:35 • 13/10/2017</div>
<div class="h" style="top:288px">Strathcona Parl</div>
<div class="d" style="top:303px">This bench is broken!</div>
<div class="s" style="top:326px">No Comments</div>
<div class="ac" style="top:340px"><span>Add a comment...</span></div>
<div class="tb"><svg style="left:19px;top:3px" width="14" height="12" fill="#3a6fc0"><use href="#home"/></svg><div class="l" style="left:18px;color:#3a6fc0">Home</div><svg style="left:102px;top:3px" width="16" height="12"><use href="#cam"/></svg><div class="l" style="left:100px">Camera</div><div class="l" style="left:180px">Emergency</div></div>
</div>

</div>
</body></html>
